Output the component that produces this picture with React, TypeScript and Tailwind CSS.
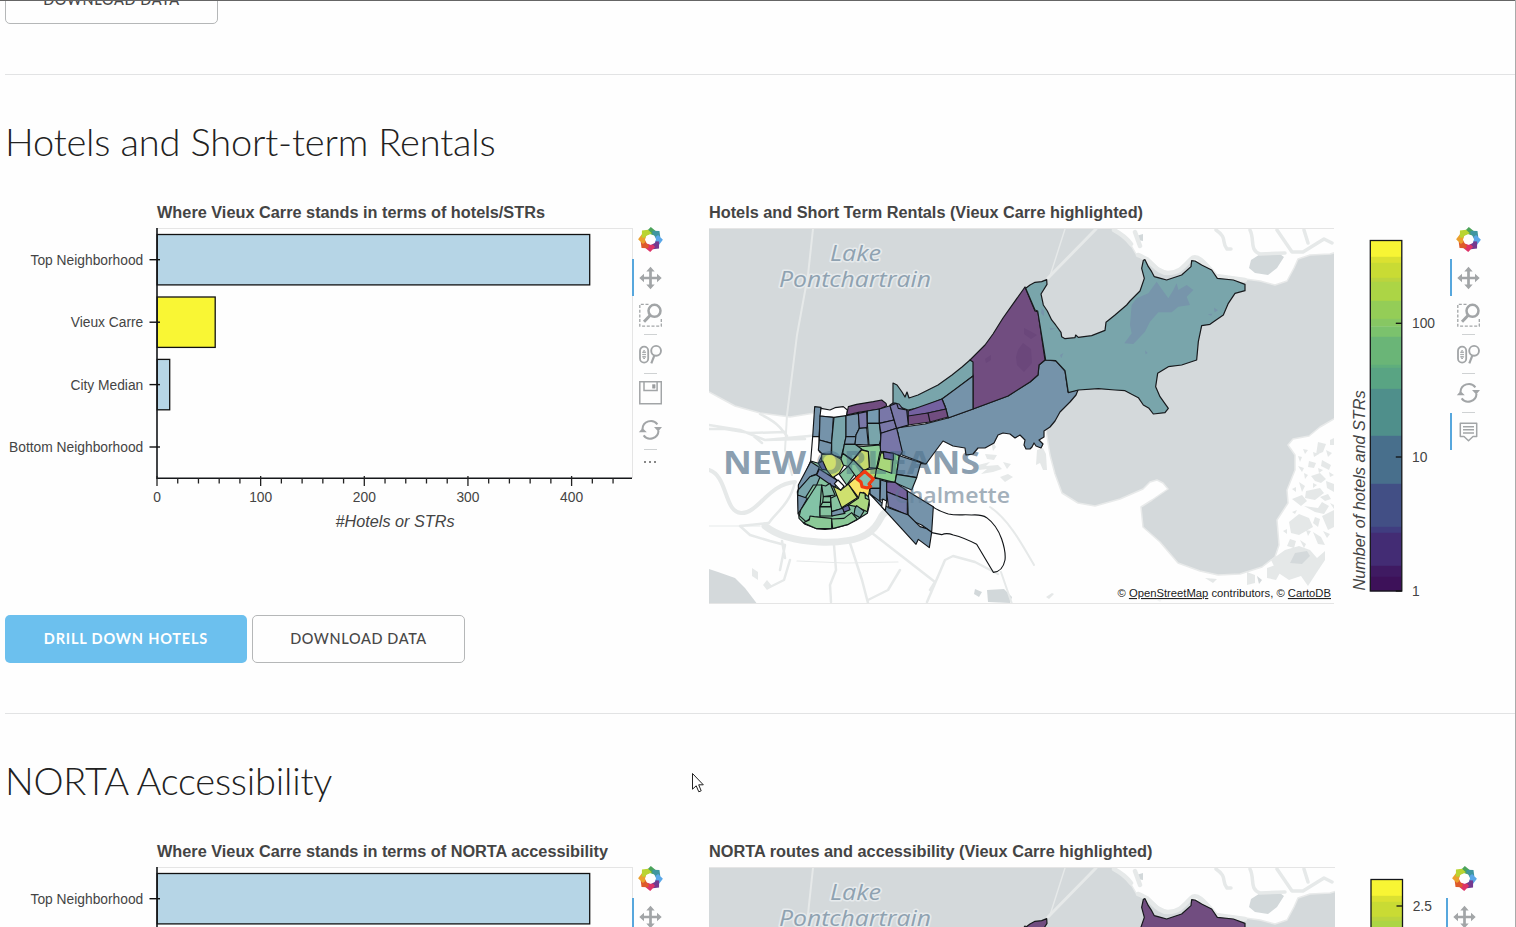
import React from "react";

const SANS = '"Liberation Sans", Arial, sans-serif';
const MAP_FONT = '"Open Sans", "Noto Sans", sans-serif';

type Shape = [string, string];

const TEAL = "#79a5ab";
const STEEL = "#7593aa";
const PURPLE = "#714d80";
const INDIGO = "#7977a8";
const GREEN = "#86c39f";
const LIME = "#cfe06f";

/* Central neighborhoods, drawn on a grid of one third of a pixel */
const CITY: Shape[] = [
  ["M92,228 L120,228 140,255 170,285 195,310 225,350 265,325 268,360 262,385 230,405 205,418 160,430 135,433 110,431 75,418 57,400 52,320Z", GREEN],
  ["M104,65 L123,67 117,155 98,155Z", STEEL],
  ["M98,155 L117,155 118,200 128,207 115,235 92,228Z", "#fefefe"],
  ["M123,70 L150,75 165,68 190,65 202,75 200,95 165,98 120,93Z", "#fefefe"],
  ["M200,90 L205,65 230,58 280,50 305,45 318,55 320,62 300,72 235,82Z", PURPLE],
  ["M120,93 L160,97 155,175 118,165Z", STEEL],
  ["M118,165 L155,175 153,213 125,205 115,195Z", STEEL],
  ["M162,97 L198,92 198,155 193,180 183,218 155,210 155,170Z", TEAL],
  ["M198,92 L235,85 238,130 228,150 228,155 198,155Z", STEEL],
  ["M198,155 L228,155 225,178 193,178Z", STEEL],
  ["M235,85 L260,80 262,118 260,130 238,130Z", INDIGO],
  ["M262,78 L298,72 298,115 262,115Z", "#759ab0"],
  ["M238,130 L260,128 265,180 225,178 228,150Z", STEEL],
  ["M262,115 L298,115 303,160 298,178 267,180Z", TEAL],
  ["M298,72 L330,62 342,105 298,115Z", INDIGO],
  ["M298,115 L342,105 350,130 303,145Z", INDIGO],
  ["M303,145 L350,130 367,200 360,212 335,205 300,200Z", INDIGO],
  ["M330,62 L350,55 355,70 380,75 385,120 350,130Z", INDIGO],
  ["M220,182 L250,184 300,180 302,200 290,250 268,248 265,200 245,194Z", "#8ccb96"],
  ["M193,178 L225,178 245,192 218,225 188,205Z", "#78a9a6"],
  ["M125,208 L155,207 182,222 192,240 178,265 158,278 140,255 125,235Z", LIME],
  ["M188,205 L218,228 205,245 190,240 183,222Z", GREEN],
  ["M220,225 L245,195 265,200 268,248 250,258Z", "#c7d96e"],
  ["M205,243 L226,265 200,300 178,268Z", GREEN],
  ["M220,225 L250,255 230,278 205,243Z", GREEN],
  ["M250,255 L290,250 285,280 255,285Z", "#b4da72"],
  ["M300,200 L340,205 358,212 345,293 285,278 290,250Z", "#8bcf90"],
  ["M303,203 L340,210 335,265 292,250Z", "#a9d77a"],
  ["M310,200 L340,205 340,225 312,220Z", "#65629a"],
  ["M358,212 L435,237 422,235 410,278 350,268Z", STEEL],
  ["M350,268 L410,278 395,315 345,293Z", TEAL],
  ["M272,278 L300,282 300,310 270,310Z", TEAL],
  ["M270,310 L300,310 300,352 270,328Z", STEEL],
  ["M302,285 L320,290 320,350 308,345 300,345Z", STEEL],
  ["M320,290 L345,292 382,318 382,345 320,320Z", "#75619c"],
  ["M320,320 L382,345 382,390 325,365Z", "#747aa6"],
  ["M382,318 L460,365 455,442 425,420 385,403Z", STEEL],
  ["M268,325 L325,368 385,390 420,425 438,430 455,442 448,488 415,463 408,478Z", STEEL],
  ["M308,342 L320,348 316,377 305,365Z", "#fefefe"],
  ["M92,230 L118,247 110,267 95,272 55,315 55,300Z", STEEL],
  ["M115,235 L128,228 140,255 125,253Z", "#61639b"],
  ["M55,315 L90,275 125,264 110,300 100,300 75,340 53,330Z", TEAL],
  ["M53,330 L82,340 65,370 54,387Z", STEEL],
  ["M118,252 L170,285 165,308 110,270Z", "#7081a7"],
  ["M125,300 L137,303 150,295 165,330 130,335Z", "#82bba3"],
  ["M110,300 L125,300 120,366 120,400 88,402 78,410 58,392 62,375Z", "#83c3a6"],
  ["M130,335 L152,335 152,352 128,352Z", GREEN],
  ["M128,352 L152,352 152,365 120,365Z", GREEN],
  ["M120,366 L155,366 158,393 120,393Z", GREEN],
  ["M152,340 L172,330 188,370 155,380Z", GREEN],
  ["M160,304 L182,315 205,297 232,338 185,368Z", LIME],
  ["M205,297 L235,270 270,308 265,335 250,322 237,340Z", "#fbe468"],
  ["M205,360 L235,340 240,322 255,325 256,340 268,345 262,380 230,365Z", "#aad880"],
  ["M155,380 L188,370 195,385 155,393Z", STEEL],
  ["M188,368 L205,360 210,374 192,382Z", "#65629a"],
  ["M225,370 L230,362 252,378 240,398 222,388Z", "#78a9a6"],
  ["M70,413 L88,405 90,393 103,395 155,400 155,431 110,431Z", "#8bc997"],
  ["M155,402 L192,400 215,383 232,403 205,418 158,431Z", "#8bc997"],
  ["M163,296 L174,285 192,303 182,316Z", "#fefefe"],
];

const EAST =
  "M32,190 L45,180 60,172 80,170 95,164 96,178 78,207 85,240 97,258 110,285 122,300 138,322 140,335 150,341 180,338 182,330 190,337 230,332 270,316 273,292 300,270 335,240 345,228 375,198 388,160 380,130 385,106 390,104 400,125 410,140 418,155 437,160 455,165 500,150 528,125 530,107 540,108 560,120 590,135 607,160 655,165 690,178 690,197 660,205 640,235 625,270 600,287 585,298 560,302 550,350 545,405 500,420 460,425 428,445 422,485 435,515 460,550 450,563 415,567 402,550 385,540 370,518 350,508 330,497 300,495 250,491 190,495 160,503 150,437 122,407 92,405 68,258 60,255Z";

const MARSH =
  "M1318,442 l8,2 -3,8 -7,3z M1309,461 l7,2 -2,5 -6,-1z M1322,460 l9,5 -2,5 -8,-4z M1298,466 l6,2 -2,4z M1311,476 l9,-3 6,6 -5,4 -6,-2z M1326,481 l8,3 0,8 -7,-4z M1299,482 l6,4 -3,6z M1306,491 l14,-3 4,5 -9,7 -10,-2z M1292,499 l10,-4 5,6 -6,5z M1304,506 l14,2 4,-6 7,4 -5,8 -9,-2z M1289,522 l10,-8 10,4 4,9 -14,8 -8,-2z M1322,516 l12,-6 0,17 -6,3z M1290,539 l6,2 -2,7 -7,-2z M1313,532 l8,5 4,8 -7,-1z M1300,540 l6,4 -2,4z M1298,456 l4,1 -2,5z M1330,440 l4,-2 0,7 -4,0z M1303,449 l5,1 -3,4z M1313,452 l6,2 -5,3z M1326,450 l6,3 -4,4z M1304,473 l4,2 -3,4z M1318,468 l5,2 -4,3z M1329,472 l5,3 -4,2z M1292,489 l4,-2 0,5z M1313,483 l4,2 -4,3z M1320,497 l8,-3 3,5 -6,2z M1330,503 l4,2 0,4z M1315,517 l5,2 -2,8 -5,-4z M1306,530 l5,1 -3,5z M1323,531 l7,3 -3,4z M1292,512 l5,-2 -2,4z M1283,531 l4,-2 0,5z M1285,550 l14,-4 11,4 7,8 8,-7 0,9 -8,12 -9,14 -7,-10 -12,4 -12,-8 -6,-12z M1267,568 l8,-3 6,6 -5,9 -9,-2z M1247,572 l8,3 0,8 -8,2z M1205,578 l12,1 -4,4z M1037,450 l6,-2 3,6 1,16 -4,0 -3,-7 -4,2z M1157,600 l5,-1 -2,3z M1046,597 l6,-4 2,1 -5,5z";

function Tiles() {
  return (
    <>
      <rect x="709" y="228" width="627" height="375" fill="#d4d9db" />
      <g fill="#fefefe" stroke="#e8eaea" strokeWidth="1.5" strokeLinejoin="round">
        <path d="M700,386 L709,392 722,399 735,406 760,413 790,417 815,413 850,406 900,405 960,380 1030,375 1046,430 1050,455 1055,474 1062,493 1078,503 1095,506 1120,499 1143,489 1150,482 1157,480 1163,483 1168,489 1152,500 1141,507 1143,527 1160,542 1178,563 1200,571 1218,575 1240,574 1262,567 1275,557 1279,545 1277,520 1288,503 1287,490 1295,470 1295,455 1288,445 1293,439 1309,436 1320,427 1337,417 1345,610 700,610Z" />
        <path d="M1112,226 L1124,238 1132,247 1136,254 1148,258 1158,268 1168,273 1180,271 1190,262 1200,262 1216,275 1245,279 1260,281 1275,285 1287,281 1294,268 1298,259 1310,255 1330,254 1337,252 1337,222Z" />
      </g>
      <path d="M700,566 L718,572 735,578 745,588 758,605 700,605Z" fill="#d4d9db" />
      <path d="M1251,260 L1262,253 1277,252 1284,257 1277,268 1268,275 1255,273 1249,268Z M987,590 L1004,589 1012,597 1010,603 988,602Z M975,589 l7,3 -3,5 -5,-3z M1136,236 l7,-2 0,7 -6,-1z" fill="#d2d8da" />
      <g fill="none" stroke="#e6e9e9" strokeLinejoin="round" strokeLinecap="round">
        <path d="M813,229 L808,275 797,335 787,415 785,450 792,475" strokeWidth="2" />
        <path d="M1096,229 L1048,278" strokeWidth="3" />
        <path d="M1065,229 L1050,276" strokeWidth="1.4" />
        <path d="M1114,230 Q1125,236 1131,244 M1135,232 L1140,246 M1138,255 C1150,258 1156,273 1168,273 S1185,265 1191,259 1205,263 1216,276 L1245,280" strokeWidth="4.5" />
        <path d="M1216,230 C1228,238 1221,242 1227,249 H1231 M1250,230 C1255,240 1249,250 1260,254 L1285,253 M1277,230 L1292,252 1303,252 1324,239 1332,243 M1304,230 L1308,243" strokeWidth="3.5" />
        <path d="M709,425 L740,430 765,440 820,435 M709,429 L725,429 750,433 785,432 M750,433 L762,443 M760,414 C782,425 781,430 787,436 M765,440 L805,439" strokeWidth="2.5" />
        <path d="M709,470 C728,476 724,512 741,513 C758,514 768,484 795,482" strokeWidth="4" />
        <path d="M765,526 C790,546 850,546 867,534 C882,524 879,515 886,512" strokeWidth="7" />
        <path d="M768,523 L740,526 750,535 770,541 785,545 780,570 M795,482 C790,505 774,514 769,523 M782,541 L785,558 M790,560 l-6,20 -16,8" strokeWidth="2.5" />
        <path d="M834,545 L836,570 830,585 831,602 M850,543 L862,580 868,603 M872,533 L935,582 930,590 M927,602 L945,560 953,556 975,562 998,574 M868,600 L888,590 900,570" strokeWidth="2.5" />
        <path d="M1001,572 L1012,604 M990,507 C1010,520 1025,550 1034,565" strokeWidth="2" />
        <path d="M709,526 L760,526 M797,561 L845,563 898,562" strokeWidth="1.2" />
      </g>
      <path d="M752,568 l6,4 0,8 -6,-4z M767,580 l5,6 -5,4 -4,-5z M978,465 l12,-3 -4,4 12,-1 4,4 -9,3 -12,2 6,-5 -8,1z M985,454 l12,1 -3,5 -7,-1z M990,437 l6,10 -3,4z M1000,477 l8,-3 5,3 -8,5z M1003,462 l8,2 -4,5z" fill="#e6e9e9" />
      <path d={MARSH} fill="#e5e8e8" />
      <path d="M1295,553 l12,-2 3,5 -8,8 -12,-1z M1257,576 l5,4 -3,4z" fill="#d4d9db" />
      <g fontFamily={MAP_FONT} fontStyle="italic" fontSize="21" fill="#8fa2b1" stroke="#e6eaec" strokeWidth="3" paintOrder="stroke" strokeLinejoin="round">
        <text x="830" y="260.5" textLength="51" lengthAdjust="spacingAndGlyphs">Lake</text>
        <text x="779" y="286.5" textLength="152" lengthAdjust="spacingAndGlyphs">Pontchartrain</text>
      </g>
      <PlaceNames />
    </>
  );
}

function PlaceNames({ clip }: { clip?: string }) {
  return (
    <g
      fontFamily={MAP_FONT}
      opacity={clip ? 0.4 : 1}
      fill={clip ? "#3f6480" : "#8b9fb0"}
      clipPath={clip ? `url(#${clip})` : undefined}
      aria-hidden={clip ? true : undefined}
    >
      <text x="723" y="473.5" fontSize="32.5" fontWeight="700" textLength="257" lengthAdjust="spacingAndGlyphs">NEW ORLEANS</text>
      <text x="894" y="503" fontSize="21.5" fontWeight="600" fill={clip ? "#5a7a92" : "#a3b0bb"} textLength="116" lengthAdjust="spacingAndGlyphs">Chalmette</text>
    </g>
  );
}

function RegionMap({ id, eastFill, width }: { id: string; eastFill: string; width: number }) {
  return (
    <g>
      <clipPath id={id}>
        <rect x="709" y="228" width={width} height="375" />
      </clipPath>
      <clipPath id={`${id}-city`}>
        <path d="M820,453 L880,440 943,441 937,449 925,464 920,463 912,490 933,506 930,530 880,498 840,500 800,480 811,462Z" />
      </clipPath>
      <g clipPath={`url(#${id})`}>
        <Tiles />
        <g stroke="#17191c" strokeWidth="1.2" strokeLinejoin="round">
          <path
            d="M973,409 L1008,396 1030,382 1038,375 1039,365 1045,360 1056,361 1065,371 1068,392 1078,390 1076,395 1070,402 1060,412 1055,421 1050,427 1044,431 1044,437 1039,440 1043,444 1041,448 1036,446 1034,443 1032,447 1030,449 1026,449 1024,445 1025,440 1020,435 1015,438 1010,434 1003,433 998,435 994,443 985,448 978,448 973,454 966,455 965,448 953,446 947,443 943,441 937,449 926,464 902,455 898,433 896,428 925,424 948,418Z"
            fill={STEEL}
          />
          <path d="M1025,287 L1035,311 1038,312 1045,360 1039,365 1038,375 1030,382 1008,396 973,409 973,376 970,360 985,345 993,334 1003,318Z" fill={PURPLE} />
          <path d="M1018,350 l5,-7 8,6 1,14 -8,9 -7,-7 -1,-8z M1024,328 l6,3 7,4 -6,4 -7,-5z M985,359 l6,-4 0,5 -5,3z" fill="#6b477b" stroke="none" />
          <path d="M893,404 L893,383 897,385 902,392 905,397 907,392 909,398 918,395 938,385 952,375 962,367 970,360 973,362 973,376 955,390 942,399 922,407 908,410 900,407 895,403Z" fill={TEAL} />
          <path d="M942,399 L973,376 973,409 948,418 945,406Z" fill={STEEL} />
          <path d="M908,411 L925,405 942,399 946,409 928,413 908,417Z" fill="#7461a0" />
          <path d="M908,416 L928,413 930,422 908,425Z M928,413 L946,409 948,417 930,422Z" fill={PURPLE} />
          <path d="M893,403 L899,404 903,409 908,411 908,425 897,428 890,405Z" fill={INDIGO} />
        </g>
        <g transform="translate(1015 225) scale(0.33333)">
          <path d={EAST} fill={eastFill} stroke="#17191c" strokeWidth="3.6" strokeLinejoin="round" />
          {eastFill === TEAL && (
            <path
              d="M425,170 L440,192 460,220 475,195 485,175 490,195 515,180 535,195 515,215 525,240 490,245 470,262 430,262 405,290 390,320 355,357 328,355 350,325 345,300 350,240 365,220 400,205Z M597,248 l12,8 -10,6z M578,268 l14,-2 -3,6z M390,376 l8,8 -6,4z M80,250 l8,8 -2,16 -8,-10z M104,308 l18,3 -16,4z M135,390 l10,-6 -6,16z"
              fill="#7795ab"
            />
          )}
        </g>
        <g transform="translate(780 385) scale(0.33333)" stroke="#111417" strokeWidth="3.4" strokeLinejoin="round">
          {CITY.map(([d, fill]) => (
            <path key={d} d={d} fill={fill} />
          ))}
          <path d="M458,365 C475,378 490,382 505,387 C530,392 550,388 575,390 Q605,388 620,398 Q650,420 665,462 Q678,500 675,525 Q668,560 640,562 L590,478 C560,462 540,455 520,450 Q500,442 485,449 L470,446 455,443" fill="none" />
        </g>
        <PlaceNames clip={`${id}-city`} />
        <path
          transform="translate(780 385) scale(0.33333)"
          d="M230,281 L254,259 280,282 267,297 272,304 262,309 246,305 243,291Z"
          fill="#83bfae"
          stroke="#f03a10"
          strokeWidth="9.5"
          strokeLinejoin="round"
        />
      </g>
      <path d={`M709,228.5 H${709 + width}`} stroke="#e5e5e5" />
      <path d={`M709,603.5 H${709 + width}`} stroke="#e5e5e5" />
    </g>
  );
}

const BAR_STOPS: [number, string][] = [
  [0, "#f8f534"], [16.3, "#dbe131"], [22.3, "#c9db34"], [37.3, "#bbd43e"], [41.3, "#acd545"],
  [60.3, "#94cd57"], [78.3, "#87c763"], [86, "#7bc26d"], [96.3, "#6ab577"], [124.3, "#5fae7c"],
  [127.3, "#59a483"], [148.3, "#4f8f8b"], [195.3, "#486f8c"], [243.3, "#424f85"],
  [286.3, "#403d80"], [292.3, "#432c74"], [325.3, "#3f1a62"], [336.3, "#3d1159"], [350.5, ""],
];

function ColorBar({ x, ticks }: { x: number; ticks: [number, string][] }) {
  return (
    <g>
      {BAR_STOPS.slice(0, -1).map(([y, c], i) => (
        <rect key={c} x={x} y={240.5 + y} width="31.5" height={BAR_STOPS[i + 1][0] - y + 0.3} fill={c} />
      ))}
      <rect x={x} y="240.5" width="31.5" height="350.5" fill="none" stroke="#15171a" strokeWidth="1.3" />
      {ticks.map(([y, label]) => (
        <g key={label}>
          <path d={`M${x + 25.5},${y} h6`} stroke="#111" strokeWidth="1.3" />
          <text x={x + 41.7} y={y + 5} fontSize="13.8" fill="#444" fontFamily={SANS}>{label}</text>
        </g>
      ))}
    </g>
  );
}

const ROWS: [string, number, number, string][] = [
  ["Top Neighborhood", 259.7, 432.5, "#b6d5e6"],
  ["Vieux Carre", 322.2, 58, "#f9f634"],
  ["City Median", 384.6, 12.5, "#b6d5e6"],
  ["Bottom Neighborhood", 447, 0, "#b6d5e6"],
];

function BarChart({ title, titleWidth, axis }: { title: string; titleWidth: number; axis: string }) {
  const minor = Array.from({ length: 23 }, (_, i) => i);
  return (
    <svg className="block h-[410px] w-[627px] shrink-0" viewBox="5 200 627 410" fontFamily={SANS}>
      <text x="157" y="218" fontSize="16" fontWeight="700" fill="#444" textLength={titleWidth} lengthAdjust="spacingAndGlyphs">{title}</text>
      <path d="M157,228.5 H632" fill="none" stroke="#e5e5e5" />
      {ROWS.map(([label, y, w, fill]) => (
        <g key={label}>
          {w > 0 && <rect x="157.2" y={y - 25.2} width={w} height="50.4" fill={fill} stroke="#111" strokeWidth="1.3" />}
          <text x="143.3" y={y + 5.2} textAnchor="end" fontSize="13.8" fill="#444">{label}</text>
        </g>
      ))}
      <path d="M157,228 V479 M156.5,478.3 H632" stroke="#15171a" strokeWidth="1.6" fill="none" />
      {ROWS.map(([label, y]) => (
        <path key={label} d={`M149.5,${y} H160`} stroke="#111" strokeWidth="1.4" />
      ))}
      {minor.map((i) => {
        const x = 157 + i * 20.73;
        return <path key={i} d={i % 5 ? `M${x},478 V483.5` : `M${x},476 V486`} stroke="#222" strokeWidth="1.3" />;
      })}
      {[0, 100, 200, 300, 400].map((v) => (
        <text key={v} x={157 + v * 1.0365} y="502" textAnchor="middle" fontSize="13.8" fill="#444">{v}</text>
      ))}
      <text x="335.5" y="527" fontSize="16" fontStyle="italic" fill="#444" textLength="119" lengthAdjust="spacingAndGlyphs">{axis}</text>
    </svg>
  );
}

function Logo() {
  const petals = ["#4ba35a", "#3f96a0", "#5aa7e8", "#74398f", "#dd3368", "#de5a2b", "#eba02e", "#b9d432"];
  return (
    <svg className="h-[26px] w-[26px]" viewBox="-13.5 -12.5 26 26">
      {petals.map((c, i) => (
        <path key={c} d="M-4.6,-7.6 L0.3,-12.4 L5.2,-8.6 L5.4,-3.6 L-0.6,-5.6 L-2.4,-5Z" fill={c} transform={`rotate(${i * 45})`} />
      ))}
    </svg>
  );
}

function ToolIcon({ children }: { children: React.ReactNode }) {
  return (
    <svg className="h-6 w-6" viewBox="-0.5 0 24 24" fill="none" stroke="#a2a5a7" strokeWidth="1.6">
      {children}
    </svg>
  );
}

const Pan = () => (
  <ToolIcon>
    <path d="M12,4 V20 M4,12 H20" strokeWidth="2.7" />
    <path d="M12,0.8 L16.2,5.5 H7.8Z M12,23.2 L16.2,18.5 H7.8Z M0.8,12 L5.5,7.8 V16.2Z M23.2,12 L18.5,7.8 V16.2Z" fill="#a2a5a7" stroke="none" />
  </ToolIcon>
);
const BoxZoom = () => (
  <ToolIcon>
    <path d="M10,1.3 H1.3 V23.2 H22.8 V16" strokeDasharray="3 1.7" strokeWidth="1.3" />
    <circle cx="16" cy="7.8" r="6" strokeWidth="2.5" />
    <path d="M12,12 L5.5,18.8" strokeWidth="3" />
  </ToolIcon>
);
const WheelZoom = () => (
  <ToolIcon>
    <rect x="1.5" y="4.6" width="8.2" height="16" rx="4.1" strokeWidth="1.8" />
    <path d="M4.1,10.6 L5.6,8.2 L7.1,10.6Z M4.1,14.6 L5.6,17 L7.1,14.6Z M3.7,12.6 H7.5" strokeWidth="1" />
    <circle cx="17.6" cy="8.8" r="4.9" strokeWidth="1.9" />
    <path d="M15.8,13.6 L12.8,21.4" strokeWidth="2.2" />
  </ToolIcon>
);
const Save = () => (
  <ToolIcon>
    <path d="M1.3,0.8 H22.8 V22.8 H1.3Z M5.5,0.8 V9.6 H18.6 V0.8" strokeWidth="1.5" />
    <path d="M14,3.6 h2.6 v3.6 h-2.6z" fill="#999c9e" strokeWidth="0.6" />
  </ToolIcon>
);
const Reset = () => (
  <ToolIcon>
    <path d="M4,11 A8.3,8.3 0 0 1 18.9,6.3 M20,12.6 A8.3,8.3 0 0 1 5.1,17.4" strokeWidth="2" />
    <path d="M15.5,9.1 H23.5 L19.7,13.5Z M0.3,14.3 H8.3 L4,9.9Z" fill="#a2a5a7" stroke="none" />
  </ToolIcon>
);
const Hover = () => (
  <ToolIcon>
    <path d="M3.8,3.3 H20.2 V16.5 H16.5 L12,20.7 L7.5,16.5 H3.8Z" strokeWidth="1.5" strokeLinejoin="round" />
    <path d="M6.5,6.7 H17.5 M6.5,9.8 H17.5 M6.5,12.9 H17.5" strokeWidth="1.5" />
  </ToolIcon>
);

function Tool({ active, children }: { active?: boolean; children: React.ReactNode }) {
  return (
    <div className={`flex h-[37px] w-[37px] shrink-0 items-center justify-center border-l-2 pr-[3px] ${active ? "border-[#57a7dd]" : "border-transparent"}`}>
      {children}
    </div>
  );
}

const Divider = () => <div className="mt-px ml-3 h-px w-[13px] shrink-0 bg-[#cfd2d3]" />;

function Toolbar({ map }: { map?: boolean }) {
  return (
    <div className="flex h-[410px] w-[37px] shrink-0 flex-col">
      <div className="mt-[23px] flex h-9 shrink-0 items-center justify-center pr-px pb-[3px]">
        <Logo />
      </div>
      <Tool active><Pan /></Tool>
      <Tool><BoxZoom /></Tool>
      <Divider />
      <Tool><WheelZoom /></Tool>
      <Divider />
      {map ? (
        <>
          <Tool><Reset /></Tool>
          <Divider />
          <Tool active><Hover /></Tool>
        </>
      ) : (
        <>
          <Tool><Save /></Tool>
          <Tool><Reset /></Tool>
          <Divider />
          <div className="mt-[11px] ml-3 flex gap-[3px]">
            <i className="size-[2px] bg-[#888]" />
            <i className="size-[2px] bg-[#888]" />
            <i className="size-[2px] bg-[#888]" />
          </div>
        </>
      )}
    </div>
  );
}

interface SectionProps {
  heading: string;
  headingClass: string;
  chartTitle: string;
  chartTitleWidth: number;
  axis: string;
  mapTitle: string;
  mapTitleWidth: number;
  id: string;
  eastFill: string;
  legend?: string;
  ticks: [number, string][];
  barX: number;
  mapWidth: number;
  figureClass: string;
  figureView: string;
  drill: string;
}

function Section(p: SectionProps) {
  return (
    <section className="ml-[5px] flex h-[639px] flex-col border-t border-[#e2e3e4]">
      <h2 className={`mt-[42px] h-[83px] shrink-0 whitespace-nowrap font-[Lato] text-[38px] leading-[48px] font-light text-[#222] ${p.headingClass}`}>{p.heading}</h2>
      <div className="flex h-[410px] shrink-0">
        <BarChart title={p.chartTitle} titleWidth={p.chartTitleWidth} axis={p.axis} />
        <div className="relative">
          <div className="absolute top-[28px] left-0 h-[250px] w-px bg-[#e5e5e5]" />
          <div className="relative">
            <Toolbar />
          </div>
        </div>
        <svg className={`ml-9 block h-[410px] shrink-0 ${p.figureClass}`} viewBox={p.figureView} fontFamily={SANS}>
          <text x="709" y="218" fontSize="16" fontWeight="700" fill="#444" textLength={p.mapTitleWidth} lengthAdjust="spacingAndGlyphs">{p.mapTitle}</text>
          <RegionMap id={p.id} eastFill={p.eastFill} width={p.mapWidth} />
          <g fontSize="11" fill="#222">
            <rect x="1115" y="586" width="219" height="16" fill="#fefefe" opacity="0.6" />
            <text x="1117.5" y="597" textLength="213.5" lengthAdjust="spacingAndGlyphs">
              © <tspan textDecoration="underline">OpenStreetMap</tspan> contributors, © <tspan textDecoration="underline">CartoDB</tspan>
            </text>
          </g>
          <ColorBar x={p.barX} ticks={p.ticks} />
          {p.legend && (
            <text transform="translate(1365 590.5) rotate(-90)" fontSize="16" fontStyle="italic" fill="#444" textLength="200" lengthAdjust="spacingAndGlyphs">{p.legend}</text>
          )}
        </svg>
        <Toolbar map />
      </div>
      <div className="mt-[5px] flex gap-[5px]">
        <button className="h-12 w-[242px] rounded-[5px] bg-[#6cc0ee] font-[Lato] text-[14.5px] font-bold tracking-[0.82px] text-white">{p.drill}</button>
        <DownloadButton />
      </div>
    </section>
  );
}

function DownloadButton() {
  return (
    <button className="h-12 w-[213px] shrink-0 rounded-[5px] border border-[#b5b7b8] font-[Lato] text-[14.5px] font-medium tracking-[0.62px] text-[#484848]">DOWNLOAD DATA</button>
  );
}

export default function App() {
  return (
    <div className="relative h-[927px] w-[1516px] overflow-hidden border-r border-[#aaa] bg-[#fefefe]">
      <div className="h-[74px] overflow-hidden pl-[5px]">
        <div className="-mt-6">
          <DownloadButton />
        </div>
      </div>
      <Section
        heading="Hotels and Short-term Rentals"
        headingClass="tracking-[-0.16px]"
        chartTitle="Where Vieux Carre stands in terms of hotels/STRs"
        chartTitleWidth={388}
        axis="#Hotels or STRs"
        mapTitle="Hotels and Short Term Rentals (Vieux Carre highlighted)"
        mapTitleWidth={434}
        id="hotels-map"
        eastFill={TEAL}
        legend="Number of hotels and STRs"
        ticks={[[323.3, "100"], [457, "10"], [591, "1"]]}
        barX={1370.3}
        mapWidth={625}
        figureClass="w-[745px]"
        figureView="705 200 745 410"
        drill="DRILL DOWN HOTELS"
      />
      <Section
        heading="NORTA Accessibility"
        headingClass="tracking-[-0.22px]"
        chartTitle="Where Vieux Carre stands in terms of NORTA accessibility"
        chartTitleWidth={451}
        axis="Accessibility"
        mapTitle="NORTA routes and accessibility (Vieux Carre highlighted)"
        mapTitleWidth={443.5}
        id="norta-map"
        eastFill={PURPLE}
        ticks={[[267, "2.5"]]}
        barX={1371}
        mapWidth={626}
        figureClass="w-[741px]"
        figureView="705 200 741 410"
        drill="DRILL DOWN NORTA"
      />
      <div className="absolute inset-x-0 top-0 h-px bg-[#656565]" />
      <svg className="absolute top-[772px] left-[691px] h-[22px] w-[15px]" viewBox="0 0 15 22">
        <path d="M1.5,1.5 V17.2 L5.2,13.8 L7.8,19.8 L10.2,18.8 L7.7,12.8 H12.3Z" fill="#fff" stroke="#222" strokeWidth="1" />
      </svg>
    </div>
  );
}
